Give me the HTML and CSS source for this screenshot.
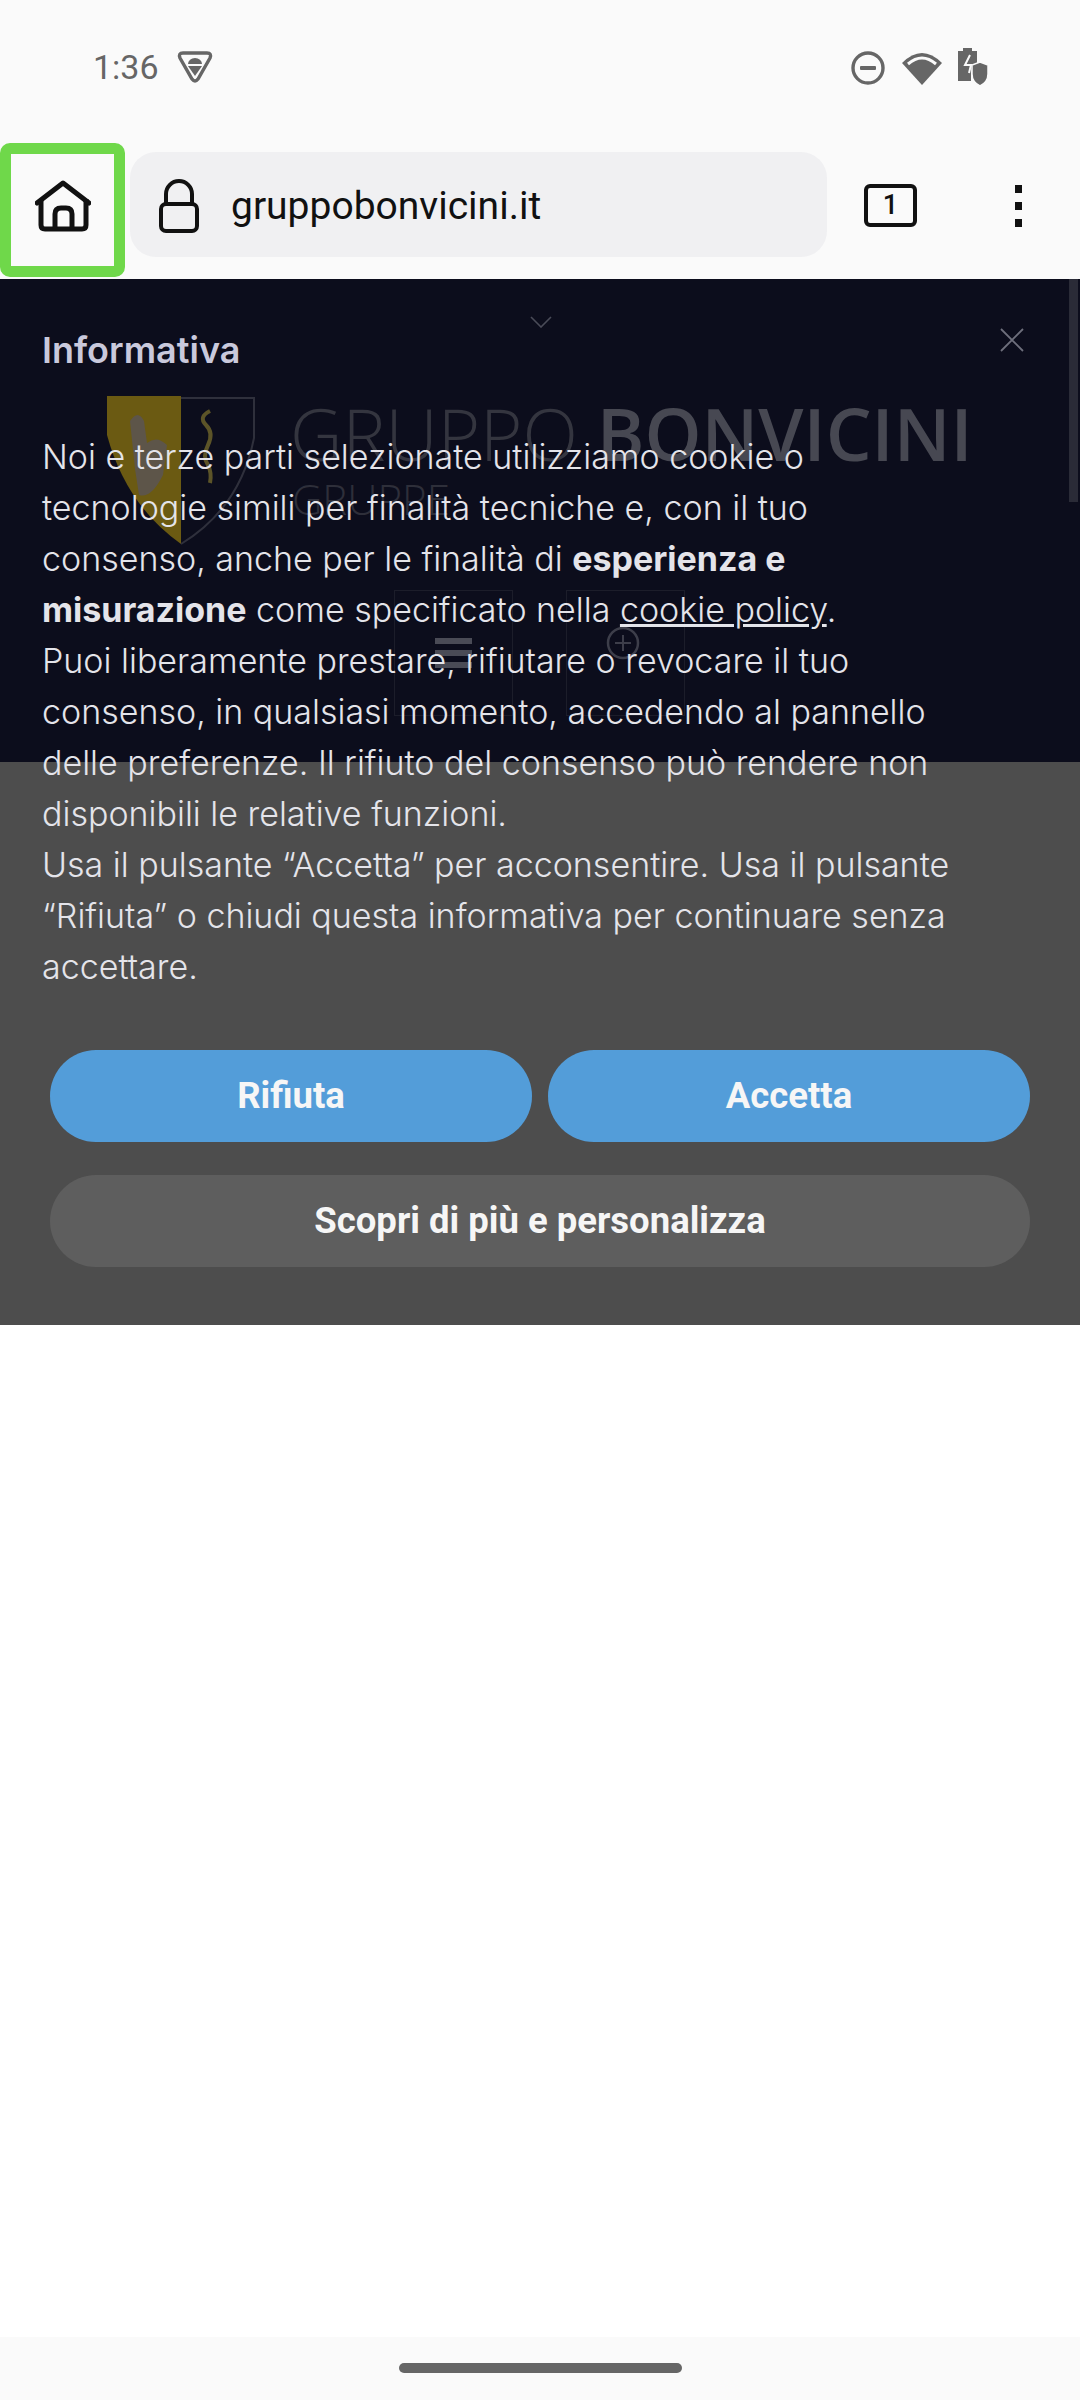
FILE: index.html
```html
<!DOCTYPE html>
<html>
	<head>
		<meta charset="UTF-8">
		<title>gruppobonvicini.it</title>
		<link rel="stylesheet" href="styles.css">
	</head>
	<body>
		<div class="page">
			<!--status bar-->
			<div class="status">
				<div class="status-left">
					<span class="time">1:36</span>
					<svg class="ico-debug" width="36" height="32" viewBox="0 0 36 32">
						<path d="M6 2h24q5 0 3 5L21 28q-3 4-6 0L3 7Q1 2 6 2z" fill="none" stroke="#666" stroke-width="3.4"/>
						<path d="M11 13a7 6 0 0 1 14 0z" fill="#666"/>
						<path d="M11 15h14l-7 10z" fill="#666"/>
					</svg>
				</div>
				<div class="status-right">
					<svg width="36" height="36" viewBox="0 0 36 36">
						<circle cx="18" cy="18" r="15" fill="none" stroke="#666" stroke-width="3.4"/>
						<rect x="10" y="16" width="16" height="4" rx="1" fill="#666"/>
					</svg>
					<svg width="40" height="34" viewBox="0 0 40 34">
						<path d="M0 12Q20-8 40 12L20 34z" fill="#666"/>
						<path d="M6 13Q20 1 34 13" fill="none" stroke="#fafafa" stroke-width="3"/>
					</svg>
					<svg width="32" height="40" viewBox="0 0 32 40">
						<path d="M5 3V0h9v3h5v13q-6 3-6 9v8H0V3z" fill="#666"/>
						<path d="M12 7L7 17h6l-2 8" fill="none" stroke="#fafafa" stroke-width="2"/>
						<path d="M22 14l8 3v9q0 8-8 12q-8-4-8-12v-9z" fill="#666" stroke="#fafafa" stroke-width="1.5"/>
					</svg>
				</div>
			</div>

			<!--browser toolbar-->
			<div class="toolbar">
				<div class="home-box">
					<svg width="56" height="52" viewBox="0 0 56 52">
						<path d="M2 23L28 3l26 20" fill="none" stroke="#111" stroke-width="5" stroke-linecap="round" stroke-linejoin="round"/>
						<path d="M6 19v26q0 4 4 4h37q4 0 4-4V19" fill="none" stroke="#111" stroke-width="5"/>
						<path d="M20 49V34q0-6 6-6h5q6 0 6 6v15" fill="none" stroke="#111" stroke-width="5"/>
					</svg>
				</div>
				<div class="url-bar">
					<svg class="lock" width="40" height="54" viewBox="0 0 40 54">
						<rect x="2" y="25" width="36" height="27" rx="5" fill="none" stroke="#111" stroke-width="4"/>
						<path d="M7 25V15a13 13 0 0 1 26 0v10" fill="none" stroke="#111" stroke-width="4"/>
					</svg>
					<span class="url">gruppobonvicini.it</span>
				</div>
				<div class="tab-count">1</div>
				<div class="dots">
					<i></i><i></i><i></i>
				</div>
			</div>

			<!--cookie banner, the site header lies under it-->
			<div class="banner">
				<div class="site-header">
					<svg class="chevron" width="22" height="12" viewBox="0 0 22 12">
						<path d="M1 1l10 10L21 1" fill="none" stroke="#4a4b58" stroke-width="1.6"/>
					</svg>
					<svg class="shield" width="150" height="150" viewBox="0 0 150 150">
						<path d="M1 1h74v148Q20 110 1 40z" fill="#6b5a12"/>
						<path d="M75 3h73v40q-14 70-73 106" fill="none" stroke="#2f303c" stroke-width="2"/>
						<path d="M24 26q8-12 14 0l3 22q10-8 20 2l-4 30q-12 24-24 20l-4-26z" fill="#5d5549"/>
						<path d="M104 16q-12 6-4 14q8 8 2 20q-6 12 0 20q4 8 2 18" fill="none" stroke="#5c5428" stroke-width="4"/>
					</svg>
					<div class="logo-name"><span class="light">GRUPPO</span> <span class="strong">BONVICINI</span></div>
					<div class="logo-sub">GRUPPE</div>
					<div class="ghost-btn ghost-menu">
						<i></i><i></i><i></i>
					</div>
					<div class="ghost-btn ghost-search">
						<svg width="36" height="36" viewBox="0 0 36 36">
							<circle cx="18" cy="18" r="15" fill="none" stroke="#3d3e4a" stroke-width="2.5"/>
							<path d="M18 10v16M10 18h16" stroke="#3d3e4a" stroke-width="2"/>
						</svg>
					</div>
					<div class="scrollbar"></div>
				</div>

				<svg class="close" width="24" height="24" viewBox="0 0 24 24">
					<path d="M1 1l22 22M23 1L1 23" stroke="#6e6f7c" stroke-width="1.8"/>
				</svg>

				<div class="banner-body">
					<div class="title">Informativa</div>
					<p class="text">Noi e terze parti selezionate utilizziamo cookie o tecnologie simili per finalità tecniche e, con il tuo consenso, anche per le finalità di <b>esperienza e misurazione</b> come specificato nella <u>cookie policy</u>.<br>Puoi liberamente prestare, rifiutare o revocare il tuo consenso, in qualsiasi momento, accedendo al pannello delle preferenze. Il rifiuto del consenso può rendere non disponibili le relative funzioni.<br>Usa il pulsante “Accetta” per acconsentire. Usa il pulsante “Rifiuta” o chiudi questa informativa per continuare senza accettare.</p>
					<div class="btn-row">
						<div class="btn btn-blue">Rifiuta</div>
						<div class="btn btn-blue">Accetta</div>
					</div>
					<div class="btn btn-grey">Scopri di più e personalizza</div>
				</div>
			</div>

			<div class="blank"></div>

			<!--navigation bar-->
			<div class="nav">
				<div class="nav-pill"></div>
			</div>
		</div>
	</body>
</html>
```

FILE: styles.css
```css
*{
	margin: 0;
	padding: 0;
	box-sizing: border-box;
}
body{
	background-color: #fff;
	font-family: Roboto, sans-serif;
}
.page{
	width: 1080px;
	height: 2400px;
	display: flex;
	flex-direction: column;
}

/*status bar*/
.status{
	height: 143px;
	background-color: #fafafa;
	display: flex;
	justify-content: space-between;
	align-items: flex-start;
	padding: 48px 90px 0 93px;
	color: #666;
}
.status-left{
	display: flex;
	align-items: center;
	gap: 18px;
}
.time{
	font-size: 34px;
	line-height: 38px;
}
.status-right{
	display: flex;
	align-items: center;
	gap: 16px;
}

/*toolbar*/
.toolbar{
	height: 136px;
	background-color: #fafafa;
	display: flex;
	align-items: flex-start;
}
.home-box{
	width: 125px;
	height: 134px;
	border: 11px solid #6fd84a;
	border-radius: 10px;
	padding-bottom: 8px;
	display: flex;
	align-items: center;
	justify-content: center;
}
.url-bar{
	width: 697px;
	height: 105px;
	margin: 9px 0 0 5px;
	background-color: #f0f0f2;
	border-radius: 26px;
	display: flex;
	align-items: center;
	gap: 32px;
	padding-left: 29px;
}
.lock{
	margin-top: 2px;
}
.url{
	font-size: 39px;
	line-height: 46px;
	padding-top: 2px;
	color: #111;
}
.tab-count{
	width: 53px;
	height: 43px;
	margin: 41px 0 0 37px;
	border: 4px solid #111;
	border-radius: 6px;
	font-size: 27px;
	font-weight: 500;
	line-height: 35px;
	text-align: center;
	color: #111;
}
.dots{
	margin: 42px 0 0 98px;
	display: flex;
	flex-direction: column;
	gap: 9px;
}
.dots i{
	display: block;
	width: 7px;
	height: 8px;
	background-color: #111;
}

/*banner*/
.banner{
	height: 1046px;
	background-color: #4d4d4d;
	position: relative;
}
.site-header{
	position: absolute;
	top: 0;
	left: 0;
	width: 100%;
	height: 483px;
	background-color: #0c0d1c;
}
.chevron{
	position: absolute;
	left: 530px;
	top: 37px;
}
.shield{
	position: absolute;
	left: 106px;
	top: 116px;
}
.logo-name{
	position: absolute;
	left: 290px;
	top: 112px;
	font-family: "Open Sans", sans-serif;
	font-size: 72.5px;
	line-height: 84px;
	white-space: nowrap;
}
.logo-name .light{
	font-weight: 300;
	color: #34353f;
}
.logo-name .strong{
	font-weight: 600;
	color: #474852;
}
.logo-sub{
	position: absolute;
	left: 292px;
	top: 195px;
	font-family: "Open Sans", sans-serif;
	font-size: 42px;
	font-weight: 300;
	line-height: 50px;
	color: #2e2f3a;
}
.ghost-btn{
	position: absolute;
	top: 311px;
	width: 119px;
	height: 126px;
	border: 1px solid #1c1d2a;
	display: flex;
	flex-direction: column;
	align-items: center;
	justify-content: center;
	gap: 6px;
}
.ghost-menu{
	left: 394px;
}
.ghost-menu i{
	display: block;
	width: 37px;
	height: 6px;
	background-color: #4a4b56;
}
.ghost-search{
	left: 566px;
	padding: 0 6px 20px 0;
}
.scrollbar{
	position: absolute;
	right: 2px;
	top: 0;
	width: 9px;
	height: 223px;
	background-color: #2a2b37;
}
.close{
	position: absolute;
	left: 1000px;
	top: 49px;
}
.banner-body{
	position: relative;
	padding: 49px 50px 0 42px;
}
.title{
	font-family: Inter, sans-serif;
	font-size: 36px;
	font-weight: 600;
	line-height: 44px;
	color: #c9c9dc;
}
.text{
	margin-top: 59px;
	width: 930px;
	font-family: Inter, sans-serif;
	font-size: 34px;
	font-weight: 300;
	line-height: 51px;
	color: #e4e4ea;
}
.text b{
	font-weight: 700;
}
.btn-row{
	display: flex;
	gap: 16px;
	margin: 58px 0 33px 8px;
}
.btn{
	width: 482px;
	height: 92px;
	border-radius: 46px;
	font-size: 36.5px;
	font-weight: 700;
	line-height: 92px;
	text-align: center;
	color: #f6f6f6;
}
.btn-blue{
	background-color: #539dd9;
}
.btn-grey{
	width: 980px;
	margin-left: 8px;
	background-color: #5e5e5e;
}

.blank{
	flex: 1;
}

/*navigation bar*/
.nav{
	height: 63px;
	background-color: #fafafa;
	padding-top: 26px;
}
.nav-pill{
	width: 283px;
	height: 10px;
	margin: 0 auto;
	background-color: #666;
	border-radius: 5px;
}
```
